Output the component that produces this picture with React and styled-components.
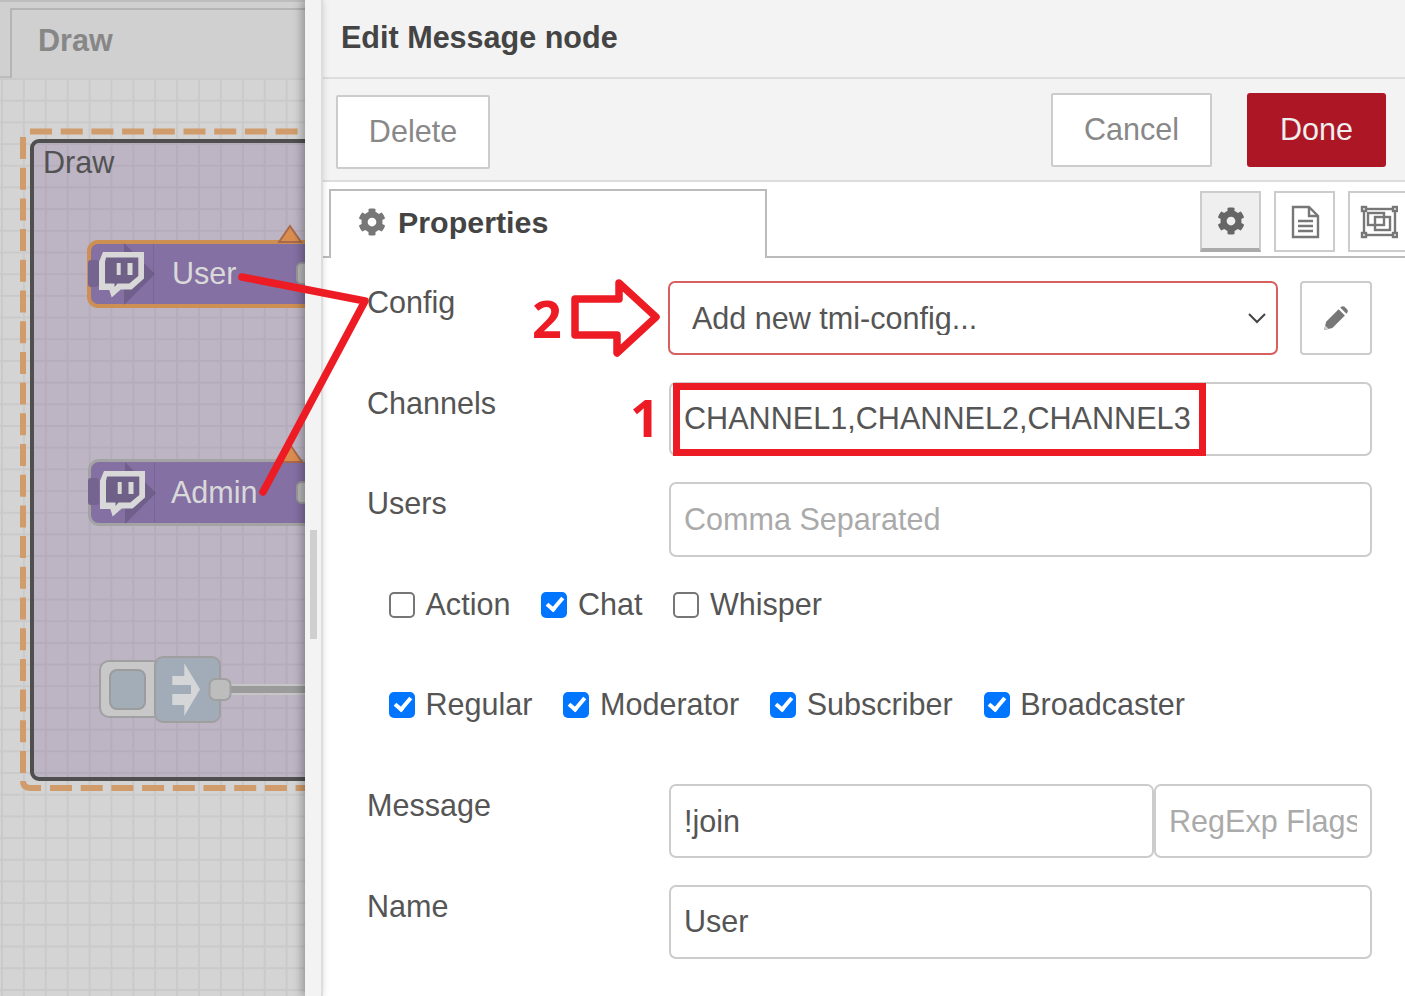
import React from "react";
import styled, { createGlobalStyle } from "styled-components";
import { FaCog } from "react-icons/fa";

const GlobalStyle = createGlobalStyle`
  html, body {
    margin: 0;
    padding: 0;
    background: #fff;
    font-family: "Liberation Sans", Arial, sans-serif;
  }
`;

const FONT = "30.55px";
const RED = "#ed1c24";

const Page = styled.div`
  position: relative;
  display: flex;
  width: 1405px;
  height: 996px;
  overflow: hidden;
  color: #555;
  font-size: ${FONT};
`;

/* ---------- dimmed flow editor on the left ---------- */

const EditorPane = styled.div`
  display: flex;
  flex-direction: column;
  width: 305px;
  flex: none;
  overflow: hidden;
  background: #d0d0d0;
`;

const TabStrip = styled.div`
  height: 78px;
  flex: none;
  padding: 6px 0 0 10px;
  box-sizing: border-box;
  border-top: 2px solid #bdbdbd;
  border-bottom: 2px solid #bdbdbd;
`;

const FlowTab = styled.div`
  position: relative;
  height: 70px;
  padding: 13px 0 0 26px;
  box-sizing: border-box;
  background: #d0d0d0;
  border: solid #b5b5b5;
  border-width: 2px 0 0 2px;
  color: #878787;
  font-weight: 700;
`;

const Workspace = styled.div`
  position: relative;
  flex: 1;
  background-color: #d4d4d4;
  background-image:
    linear-gradient(to right, #cacaca 1.5px, transparent 1.5px),
    linear-gradient(to bottom, #cacaca 1.5px, transparent 1.5px);
  background-size: 21.9px 21.7px;
  background-position: 1px 0;
`;

const DashedOutline = styled.svg`
  position: absolute;
  left: 0;
  top: -78px;
  width: 305px;
  height: 996px;
`;

const GroupBox = styled.div`
  position: absolute;
  left: 30px;
  top: 61px;
  width: 320px;
  height: 642px;
  box-sizing: border-box;
  border: 4px solid #4f4f4f;
  border-radius: 9px;
  background: rgba(111, 75, 143, 0.22);
  padding: 1px 0 0 9px;
  line-height: 36px;
  color: #525252;
`;

const FlowNode = styled.div`
  position: absolute;
  left: ${p => p.$x}px;
  top: ${p => p.$y}px;
  width: 260px;
  height: ${p => p.$h}px;
  box-sizing: border-box;
  border: ${p => (p.$selected ? "4px solid #cd8f52" : "3px solid #a3a3a3")};
  border-radius: 11px;
  background: #8470a3;
  color: #d9d9d9;
  line-height: ${p => (p.$selected ? 58 : p.$h - 6)}px;
  padding-left: ${p => (p.$selected ? 81 : 80)}px;
`;

const NodeBadge = styled.svg`
  position: absolute;
  left: ${p => (p.$selected ? -4 : -3)}px;
  top: ${p => (p.$selected ? -4 : -3)}px;
  width: 70px;
  height: 68px;
`;

const LeftPort = styled.div`
  position: absolute;
  left: -3px;
  top: 16px;
  width: 11px;
  height: 27px;
  border-radius: 3px;
  background: #75648f;
`;

const RightPort = styled.div`
  position: absolute;
  left: 205px;
  top: ${p => p.$y}px;
  width: 24px;
  height: 23px;
  box-sizing: border-box;
  border: 2px solid #999;
  border-radius: 6px;
  background: #b8b8b8;
`;

const Warning = styled.svg`
  position: absolute;
  left: ${p => p.$x}px;
  top: ${p => p.$y}px;
  width: 26px;
  height: 20px;
`;

const InjectDrawing = styled.svg`
  position: absolute;
  left: 96px;
  top: 575px;
  width: 209px;
  height: 72px;
`;

const TwitchBadge = () => (
  <>
    <polygon points="37,3 68,34 37,65" fill="rgba(60,50,80,.28)" />
    <rect x="66" y="4" width="1" height="60" fill="rgba(60,50,80,.15)" />
    <path
      d="M16 12 H57 V38.5 L44.7 49.5 H33.7 L24.7 57.5 L22.3 50 H12 V21.7 Z"
      fill="#d8d8d8"
    />
    <path
      d="M19 17.5 H51.3 V36 L42.3 43.5 H30.5 L27.5 47 V43.5 H18 V22 Z"
      fill="#6f6088"
    />
    <rect x="29.7" y="23" width="4" height="12" fill="#d8d8d8" />
    <rect x="40.5" y="23" width="5" height="12" fill="#d8d8d8" />
  </>
);

const InjectNode = () => (
  <InjectDrawing viewBox="0 0 209 72">
    <rect x="4" y="8" width="62" height="56" rx="9" fill="#c8c8c8" stroke="#a0a0a0" strokeWidth="2" />
    <rect x="14" y="17" width="35" height="39" rx="7" fill="#a2adb8" stroke="#9c9c9c" strokeWidth="2" />
    <rect x="59" y="4" width="65" height="65" rx="8" fill="#a2acb8" stroke="#9f9f9f" strokeWidth="2" />
    <path
      d="M88.3 10.3 L104 36.3 L88.3 63 V52 H76.3 V41 H95 V32 H76.3 V23 H88.3 Z"
      fill="#d4d6d8"
    />
    <rect x="134" y="31" width="75" height="11" fill="#c6c6c6" />
    <rect x="130" y="33" width="79" height="7" fill="#9b9b9b" />
    <rect x="113.5" y="26" width="21" height="21" rx="6" fill="#bdbdbd" stroke="#a0a0a0" strokeWidth="2" />
  </InjectDrawing>
);

/* ---------- drawer ---------- */

const Divider = styled.div`
  position: relative;
  z-index: 1;
  width: 16px;
  flex: none;
  background: #f3f3f3;
  border-right: 2px solid #dddddd;
  box-shadow: -3px 0 10px rgba(0, 0, 0, 0.3);
`;

const DividerHandle = styled.div`
  position: absolute;
  left: 5px;
  top: 530px;
  width: 7px;
  height: 109px;
  background: #cfcfcf;
`;

const Drawer = styled.div`
  position: relative;
  display: flex;
  flex-direction: column;
  flex: 1;
  min-width: 0;
  overflow: hidden;
  background: #fff;
`;

const DrawerTitle = styled.div`
  height: 79px;
  flex: none;
  box-sizing: border-box;
  padding: 18px 0 0 18px;
  background: #f3f3f3;
  border-bottom: 2px solid #dddddd;
  color: #444;
  font-weight: 700;
  line-height: 38px;
`;

const ButtonBar = styled.div`
  display: flex;
  align-items: flex-start;
  height: 103px;
  flex: none;
  box-sizing: border-box;
  padding: 14px 19px 0 13px;
  background: #f3f3f3;
  border-bottom: 2px solid #dddddd;
`;

const TrayButton = styled.button`
  width: ${p => p.$w}px;
  height: 74px;
  margin-top: ${p => p.$top || 0}px;
  margin-left: ${p => p.$left || 0}px;
  padding: 0 0 2px;
  box-sizing: border-box;
  border: 2px solid #ccc;
  border-radius: 2px;
  background: #fff;
  color: #888;
  font: inherit;
`;

const PrimaryButton = styled(TrayButton)`
  border: 0;
  border-radius: 3px;
  background: #ad1625;
  color: #eeeeee;
`;

const TabRow = styled.div`
  display: flex;
  align-items: flex-start;
  height: 76px;
  flex: none;
  box-sizing: border-box;
  padding: 7px 0 0 6px;
  border-bottom: 2px solid #bbbbbb;
`;

const PropertiesTab = styled.div`
  display: flex;
  align-items: center;
  gap: 12px;
  width: 438px;
  height: 69px;
  flex: none;
  box-sizing: border-box;
  padding: 0 0 5px 27px;
  background: #fff;
  border: solid #bbbbbb;
  border-width: 2px 2px 0 2px;
  color: #444;
  font-weight: 700;
  font-size: 30.4px;

  svg {
    width: 28px;
    height: 28px;
    color: #777;
  }
`;

const TabTools = styled.div`
  display: flex;
  gap: 13px;
  margin-left: auto;
  margin-right: -4px;
  padding-top: 2px;
`;

const ToolButton = styled.div`
  display: flex;
  align-items: center;
  justify-content: center;
  width: 61px;
  height: 61px;
  flex: none;
  box-sizing: border-box;
  border: 2px solid #ccc;
  border-bottom: ${p => (p.$active ? "4px solid #aaa" : "2px solid #ccc")};
  background: ${p => (p.$active ? "#efefef" : "#fff")};
  color: #666;

  svg {
    display: block;
  }
`;

const Form = styled.div`
  padding: 23px 33px 0 44px;
`;

const FormRow = styled.div`
  display: flex;
  position: relative;
  height: ${p => p.$h || 74}px;
  margin-bottom: ${p => p.$gap || 27}px;
`;

const RowLabel = styled.label`
  width: 302px;
  flex: none;
  padding-top: 1px;
  line-height: 40px;
`;

const TextField = styled.input`
  flex: 1;
  min-width: 0;
  height: 100%;
  box-sizing: border-box;
  padding: 0 13px ${p => p.$lift ?? 1}px;
  border: 2px solid #ccc;
  border-radius: 7px;
  background: #fff;
  color: #555;
  font: inherit;
  outline: none;

  &::placeholder {
    color: #aaa;
    opacity: 1;
  }
`;

const ChannelsField = styled(TextField)`
  font-size: 30.6px;
`;

const FlagsField = styled(TextField)`
  flex: none;
  width: 218px;
`;

const SelectWrap = styled.div`
  position: relative;
  width: 610px;
  height: 74px;
  margin-left: -1px;
  flex: none;
`;

const ConfigSelect = styled.select`
  appearance: none;
  width: 100%;
  height: 100%;
  box-sizing: border-box;
  padding: 0 22px;
  border: 2px solid #d6605f;
  border-radius: 7px;
  background: #fff;
  color: #555;
  font: inherit;
  outline: none;
`;

const Chevron = styled.svg`
  position: absolute;
  right: 11px;
  top: 31px;
  width: 20px;
  height: 12px;
`;

const EditButton = styled.div`
  display: flex;
  align-items: center;
  justify-content: center;
  width: 72px;
  height: 74px;
  margin-left: 22px;
  padding-right: 2px;
  flex: none;
  box-sizing: border-box;
  border: 2px solid #ccc;
  border-radius: 4px;
`;

const CheckRow = styled.div`
  display: flex;
  align-items: center;
  gap: 31px;
  height: 42px;
  margin-top: -1px;
  margin-bottom: 59px;
  padding-left: 22px;
`;

const CheckItem = styled.label`
  display: flex;
  align-items: center;
  gap: 10.5px;
  line-height: 38px;
`;

const CheckBox = styled.input`
  appearance: none;
  position: relative;
  width: 26px;
  height: 26px;
  margin: 2px 0 0;
  flex: none;
  box-sizing: border-box;
  border: 2.5px solid #767676;
  border-radius: 5px;
  background: #fff;

  &:checked {
    border: 0;
    background: #0075ff;
  }

  &:checked::after {
    content: "";
    position: absolute;
    left: 8.5px;
    top: 2px;
    width: 10px;
    height: 17px;
    box-sizing: border-box;
    border: solid #fff;
    border-width: 0 4px 4px 0;
    transform: rotate(40deg);
  }
`;

/* ---------- red annotations drawn on top of the screenshot ---------- */

const Callouts = styled.svg`
  position: absolute;
  left: 0;
  top: 0;
  z-index: 3;
  width: 1405px;
  height: 996px;
  pointer-events: none;
`;

const CalloutNumber = styled.div`
  position: absolute;
  z-index: 3;
  left: ${p => p.$x}px;
  top: ${p => p.$y}px;
  color: ${RED};
  font-family: "Open Sans", sans-serif;
  font-weight: 700;
  font-size: 52px;
  line-height: 60px;
`;

const ChannelsHighlight = styled.div`
  position: absolute;
  left: 306px;
  top: 1px;
  width: 533px;
  height: 73px;
  box-sizing: border-box;
  border: 7px solid ${RED};
`;

const FileIcon = () => (
  <svg width="30" height="34" viewBox="0 0 30 34" fill="none" stroke="#777" strokeWidth="2.4">
    <path d="M3 2 H19 L28 11 V32 H3 Z" />
    <path d="M19 2 V11 H28" />
    <path d="M8 16 H23 M8 21 H23 M8 26 H23" />
  </svg>
);

const FrameIcon = () => (
  <svg width="38" height="34" viewBox="0 0 38 34" fill="none" stroke="#777" strokeWidth="2.4">
    <rect x="4" y="4" width="31" height="26" />
    <rect x="8" y="8" width="16" height="12" />
    <rect x="15" y="12" width="15" height="13" />
    <rect x="2" y="2" width="4" height="4" fill="#fff" />
    <rect x="33" y="2" width="4" height="4" fill="#fff" />
    <rect x="2" y="28" width="4" height="4" fill="#fff" />
    <rect x="33" y="28" width="4" height="4" fill="#fff" />
  </svg>
);

const PencilIcon = () => (
  <svg width="25" height="25" viewBox="0 0 24 24">
    <path d="M1 23 L3 15 L15 3 L21 9 L9 21 Z" fill="#777" />
    <path d="M16.5 1.5 L18 0.5 Q19.5 -0.3 20.7 0.8 L23.2 3.3 Q24.3 4.5 23.5 6 L22.5 7.5 Z" fill="#777" />
    <path d="M1 23 L2.1 18.6 L5.4 21.9 Z" fill="#d0d0d0" />
  </svg>
);

const TRIANGLE = "13,2 24,18 2,18";

export default function App() {
  return (
    <Page>
      <GlobalStyle />
      <EditorPane>
        <TabStrip>
          <FlowTab>Draw</FlowTab>
        </TabStrip>
        <Workspace>
          <DashedOutline viewBox="0 0 305 996" fill="none" stroke="#d19c6b" strokeWidth="6">
            <path d="M30 131.5 H305" strokeDasharray="22 8.7" />
            <path d="M23 137 V775" strokeDasharray="22 8.7" />
            <path d="M23 781 Q23 788 31 788 H41" />
            <path d="M50 788 H305" strokeDasharray="22 8.7" />
          </DashedOutline>
          <GroupBox>Draw</GroupBox>
          <FlowNode $x={87} $y={162} $h={68} $selected>
            User
            <NodeBadge $selected viewBox="0 0 70 68"><TwitchBadge /></NodeBadge>
            <LeftPort />
            <RightPort $y={18} />
          </FlowNode>
          <FlowNode $x={88} $y={381} $h={67}>
            Admin
            <NodeBadge viewBox="0 0 70 68"><TwitchBadge /></NodeBadge>
            <LeftPort />
            <RightPort $y={19} />
          </FlowNode>
          <Warning $x={277} $y={146} viewBox="0 0 26 20">
            <polygon points={TRIANGLE} fill="#d98d4e" stroke="#a9694a" strokeWidth="2" />
          </Warning>
          <Warning $x={278} $y={366} viewBox="0 0 26 20">
            <polygon points={TRIANGLE} fill="#d98d4e" stroke="#a9694a" strokeWidth="2" />
          </Warning>
          <InjectNode />
        </Workspace>
      </EditorPane>

      <Divider>
        <DividerHandle />
      </Divider>

      <Drawer>
        <DrawerTitle>Edit Message node</DrawerTitle>
        <ButtonBar>
          <TrayButton $w={154} $top={2}>Delete</TrayButton>
          <TrayButton $w={161} $left={561}>Cancel</TrayButton>
          <PrimaryButton $w={139} $left={35}>Done</PrimaryButton>
        </ButtonBar>
        <TabRow>
          <PropertiesTab>
            <FaCog />
            Properties
          </PropertiesTab>
          <TabTools>
            <ToolButton $active><FaCog size={28} /></ToolButton>
            <ToolButton><FileIcon /></ToolButton>
            <ToolButton><FrameIcon /></ToolButton>
          </TabTools>
        </TabRow>
        <Form>
          <FormRow>
            <RowLabel>Config</RowLabel>
            <SelectWrap>
              <ConfigSelect defaultValue="new">
                <option value="new">Add new tmi-config...</option>
              </ConfigSelect>
              <Chevron viewBox="0 0 20 12" fill="none" stroke="#444" strokeWidth="2">
                <polyline points="2,2 10,10 18,2" />
              </Chevron>
            </SelectWrap>
            <EditButton><PencilIcon /></EditButton>
          </FormRow>
          <FormRow $gap={26}>
            <RowLabel>Channels</RowLabel>
            <ChannelsField defaultValue="CHANNEL1,CHANNEL2,CHANNEL3" />
            <ChannelsHighlight />
          </FormRow>
          <FormRow $h={75}>
            <RowLabel>Users</RowLabel>
            <TextField placeholder="Comma Separated" />
          </FormRow>
          <CheckRow>
            <CheckItem><CheckBox type="checkbox" />Action</CheckItem>
            <CheckItem><CheckBox type="checkbox" defaultChecked />Chat</CheckItem>
            <CheckItem><CheckBox type="checkbox" />Whisper</CheckItem>
          </CheckRow>
          <CheckRow>
            <CheckItem><CheckBox type="checkbox" defaultChecked />Regular</CheckItem>
            <CheckItem><CheckBox type="checkbox" defaultChecked />Moderator</CheckItem>
            <CheckItem><CheckBox type="checkbox" defaultChecked />Subscriber</CheckItem>
            <CheckItem><CheckBox type="checkbox" defaultChecked />Broadcaster</CheckItem>
          </CheckRow>
          <FormRow>
            <RowLabel>Message</RowLabel>
            <TextField $lift={0} defaultValue="!join" />
            <FlagsField $lift={0} placeholder="RegExp Flags" />
          </FormRow>
          <FormRow>
            <RowLabel>Name</RowLabel>
            <TextField defaultValue="User" />
          </FormRow>
        </Form>
      </Drawer>

      <Callouts viewBox="0 0 1405 996" fill="none" stroke={RED} strokeWidth="7.5" strokeLinejoin="round" strokeLinecap="round">
        <polyline points="242,277 365,301 263,492" />
        <polygon points="575,299 619,299 619,283 656,317 617,353 617,335 575,335" />
      </Callouts>
      <CalloutNumber $x={532} $y={288}>2</CalloutNumber>
      <CalloutNumber $x={630} $y={387}>1</CalloutNumber>
    </Page>
  );
}
